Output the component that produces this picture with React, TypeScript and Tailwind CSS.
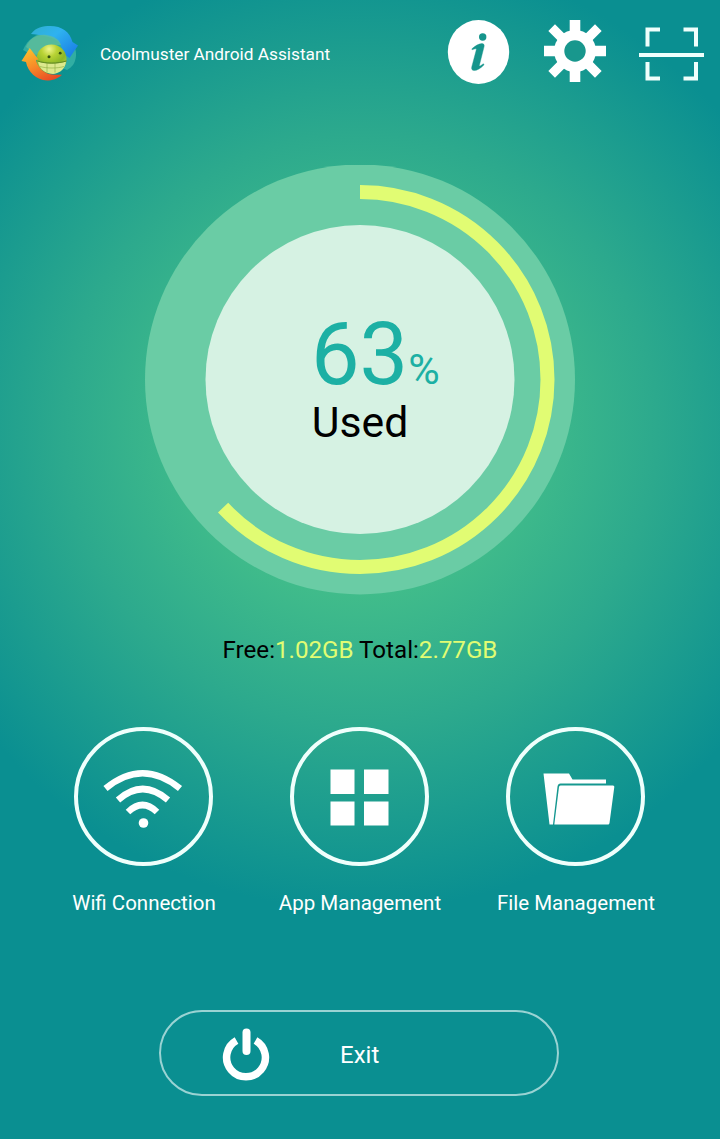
import React from "react";

const USED_PERCENT = 63;

function Logo() {
  return (
    <svg viewBox="0 0 60 60" className="h-[60px] w-[60px]">
      <defs>
        <linearGradient id="blue" x1="0" y1="0" x2="1" y2="0.8">
          <stop offset="0" stopColor="#2fb0cf" />
          <stop offset="0.45" stopColor="#2fb2f0" />
          <stop offset="1" stopColor="#1a7fe6" />
        </linearGradient>
        <linearGradient id="orange" x1="0.1" y1="0" x2="0.7" y2="1">
          <stop offset="0" stopColor="#fcc42c" />
          <stop offset="0.5" stopColor="#f78c28" />
          <stop offset="1" stopColor="#e94b25" />
        </linearGradient>
        <radialGradient id="green" cx="0.42" cy="0.16" r="0.85">
          <stop offset="0" stopColor="#eef58c" />
          <stop offset="0.3" stopColor="#b9d335" />
          <stop offset="0.65" stopColor="#8bb726" />
          <stop offset="1" stopColor="#b5d146" />
        </radialGradient>
      </defs>
      <path d="M3 27C7 17 16 10 28 9c16 0 29 10 28 24-1 8-4 11-9 14L16 34z" fill="#38b3a6" opacity="0.85" />
      <path d="M11 11C16 4 23 3 30 3c12 0 20 6 22.500 16l5.500 3.500L49.500 35 38.500 27.500l4-1c-2-7-6-10-12-12-7-2-13-3-19.500-3.500z" fill="url(#blue)" />
      <path d="M6 24c3-8 11-13 20-12 8 1 13 4 15 10l-10 0-15 10z" fill="#62bf9a" opacity="0.75" />
      <ellipse cx="31.500" cy="36" rx="15" ry="14.500" fill="url(#green)" />
      <path d="M18 38.500c8 2.500 19 2.500 28 0-1 7-5 11.500-13 12.500-8-.5-14-5.500-15-12.500z" fill="#dce98e" />
      <path d="M17.500 38c8 2.800 20 2.800 29 0M20 43.500c7 2 17 2 24 0M27 40v9.500M35 40v9.500" stroke="#8aab3c" strokeWidth="0.6" fill="none" />
      <path d="M17.500 38c8 2.800 20 2.800 29 0" stroke="#5c8420" strokeWidth="0.9" fill="none" />
      <circle cx="29" cy="33.700" r="1.500" fill="#33500f" />
      <circle cx="40.200" cy="30.200" r="1.400" fill="#33500f" />
      <path d="M9.700 25 18.500 36.500l-2.500.5c2 8 8 13.500 16 14.500 4 .3 7 .3 10 .2-4 4-10 5.800-15 5.800C16 57 8 49 6 39l-4.500-1z" fill="url(#orange)" />
    </svg>
  );
}

function InfoIcon() {
  return (
    <svg viewBox="0 0 64 66" className="h-[66px] w-[64px]">
      <ellipse cx="31.500" cy="33" rx="30.700" ry="32" fill="#fff" />
      <circle cx="35.700" cy="18" r="3.700" fill="#16958c" />
      <path d="M24.700 30c3.500-3.200 7-5.200 10-5.400 2-.1 2.800 1.100 2.400 3l-4.700 18.700c-.3 1.300.6 1 4-1.600l.7 1c-3.500 3.700-7 5.800-9.900 5.800-2.200 0-3-1.500-2.400-3.800l4.500-16.900c.3-1.200-.5-1.400-4-.1z" fill="#16958c" stroke="#16958c" strokeWidth="0.4" />
    </svg>
  );
}

function GearIcon() {
  return (
    <svg viewBox="-32 -32 64 64" className="h-16 w-16" fill="#fff">
      <path d="M-5.300-31H5.300V31H-5.300zM-31-5.300H31V5.300H-31z" />
      <path d="M-4.700-33H4.700V33H-4.700zM-33-4.700H33V4.700H-33z" transform="rotate(45)" />
      <circle r="21" />
      <circle r="10.700" fill="#18978d" />
    </svg>
  );
}

function ScanIcon() {
  return (
    <svg viewBox="0 0 66 56" className="h-14 w-[66px]" fill="none" stroke="#effffc">
      <path d="M8.500 19.500V2.500H21M44.500 2.500h12.500V19.500M8.500 35v16.500H21M44.500 51.500h12.500V35" strokeWidth="4" />
      <path d="M0 28h65" strokeWidth="4.200" />
    </svg>
  );
}

function Gauge({ percent }: { percent: number }) {
  const radius = 187.5;
  const length = 2 * Math.PI * radius;
  return (
    <div className="grid h-[430px] w-[430px] place-items-center">
      <svg viewBox="0 0 430 430" className="col-start-1 row-start-1 h-[430px] w-[430px]">
        <circle cx="215" cy="214.500" r="215" fill="#6acca5" />
        <circle cx="215" cy="214.500" r="154.500" fill="#d6f2e3" />
        <circle
          cx="215"
          cy="214.500"
          r={radius}
          fill="none"
          stroke="#e1fc73"
          strokeWidth="14"
          strokeDasharray={`${(length * percent) / 100} ${length}`}
          transform="rotate(-90 215 214.500)"
        />
      </svg>
      <div className="col-start-1 row-start-1 flex w-[98px] flex-col">
        <div className="flex items-baseline whitespace-nowrap leading-[84px] text-[#1cb0a4]">
          <span className="text-[86.500px]">{percent}</span>
          <span className="text-[43px] leading-none">%</span>
        </div>
        <span className="text-center text-[42.700px] leading-[50px] text-black">Used</span>
      </div>
    </div>
  );
}

function WifiIcon() {
  return (
    <svg viewBox="0 0 140 140" className="h-full w-full" fill="none" stroke="#fff" strokeWidth="6.500">
      <path d="M32.500 61.500Q69.500 31 107 61.500M45 73Q69.500 51 95 73M55 85Q69.500 71 84 85" />
      <circle cx="70.500" cy="96" r="4.800" fill="#fff" stroke="none" />
    </svg>
  );
}

function AppsIcon() {
  return (
    <svg viewBox="0 0 140 140" className="h-full w-full" fill="#fff">
      <path d="M41.500 42.500H65.500v24.500H41.500zM75 42.500H99.500v24.500H75zM41.500 74.500H65.500v24H41.500zM75 74.500H99.500v24H75z" />
    </svg>
  );
}

function FolderIcon() {
  return (
    <svg viewBox="0 0 140 140" className="h-full w-full" fill="#fff">
      <path d="M38.500 46.500h25.500l3.500 6h33.500v4H55.500q-2.500 0-3 3L48 97.500h-3.500z" />
      <path d="M55.500 58.500h52.500q1.500 0 1.300 1.500l-4.800 36q-.2 1.500-1.500 1.500H49.300l4.700-37.500q.2-1.500 1.500-1.500z" />
    </svg>
  );
}

function Action({ label, children }: { label: string; children: React.ReactNode }) {
  return (
    <button className="flex w-[216px] flex-col items-center">
      <span className="mr-0.5 flex h-[139px] w-[139px] items-center justify-center rounded-full border-4 border-[#effffc]">
        <span className="-m-1 h-[140px] w-[140px] shrink-0">{children}</span>
      </span>
      <span className="mt-6 whitespace-nowrap text-[20.500px] leading-[26px]">{label}</span>
    </button>
  );
}

export default function App() {
  return (
    <main className="flex h-[1139px] w-[720px] flex-col items-center overflow-hidden bg-[radial-gradient(circle_480px_at_360px_430px,#4ac68a_0%,#45c08a_28%,#2ca98d_62%,#0a8f91_100%)] font-['Roboto',sans-serif] text-white">
      <header className="flex h-[108px] w-full items-start pl-5 pr-[15px] pt-[19px]">
        <div className="mt-[4px]"><Logo /></div>
        <h1 className="ml-5 mt-[23px] text-[17.250px] leading-6">Coolmuster Android Assistant</h1>
        <div className="ml-auto flex items-start">
          <button><InfoIcon /></button>
          <button className="ml-8"><GearIcon /></button>
          <button className="ml-8 mt-2"><ScanIcon /></button>
        </div>
      </header>
      <section className="mt-[57px] flex flex-col items-center">
        <Gauge percent={USED_PERCENT} />
        <p className="mt-10 whitespace-nowrap text-[24.150px] leading-[30px] text-black">
          Free:<span className="text-[#e1fc73]">1.02GB</span> Total:<span className="text-[#e1fc73]">2.77GB</span>
        </p>
      </section>
      <nav className="mt-[62px] flex w-full justify-center">
        <Action label="Wifi Connection"><WifiIcon /></Action>
        <Action label="App Management"><AppsIcon /></Action>
        <Action label="File Management"><FolderIcon /></Action>
      </nav>
      <button className="mr-0.5 mt-[94px] flex h-[86px] w-[400px] items-center rounded-[43px] border-2 border-[#9ad3d3] pl-[60px]">
        <svg viewBox="0 0 50 54" className="mt-1 h-[54px] w-[50px]" fill="none" stroke="#fff">
          <path d="M15.500 12.500A19.400 19.400 0 1 0 34.500 12.500" strokeWidth="7.500" />
          <path d="M25.500 4.500v18.500" strokeWidth="8" strokeLinecap="round" />
        </svg>
        <span className="ml-[69px] mt-1 text-[24px]">Exit</span>
      </button>
    </main>
  );
}
